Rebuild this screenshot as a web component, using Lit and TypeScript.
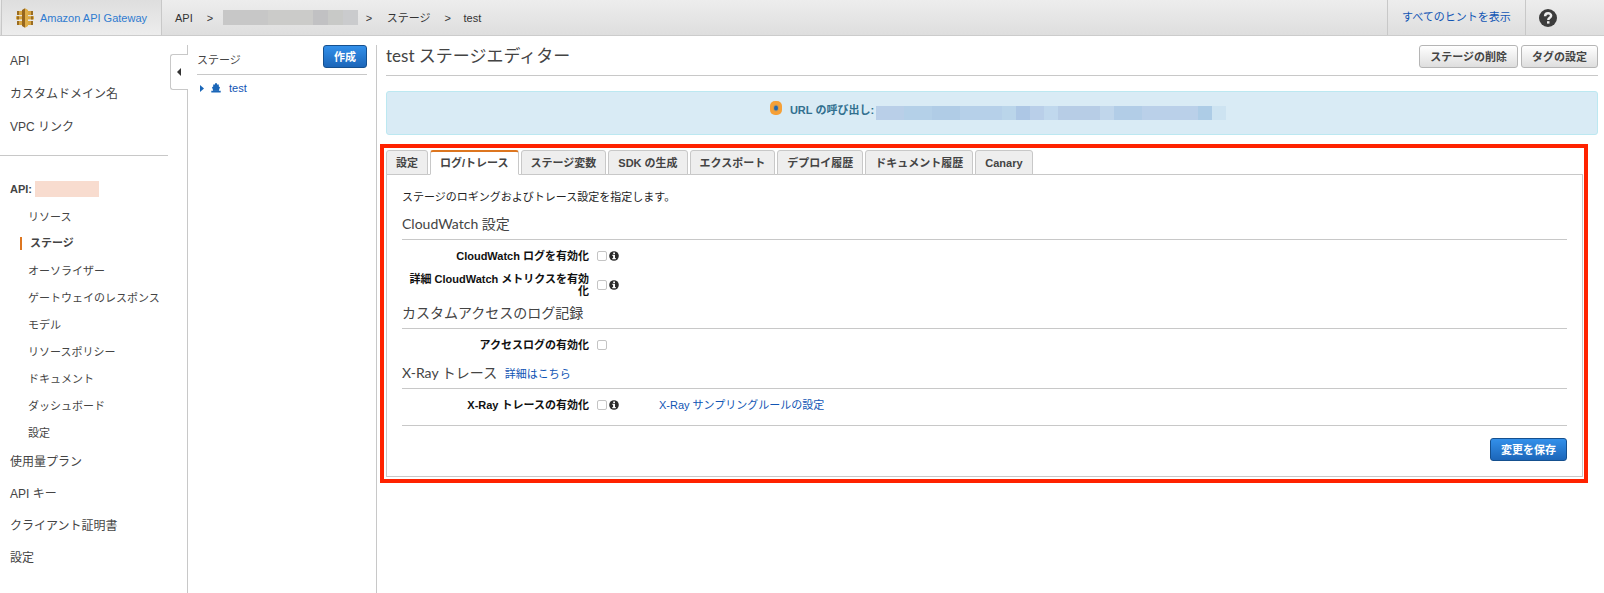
import { LitElement, html, css, svg } from "lit";
import { customElement, state } from "lit/decorators.js";
import { classMap } from "lit/directives/class-map.js";

const infoIcon = html`<svg class="info" viewBox="0 0 10 10" aria-hidden="true">
  <circle cx="5" cy="5" r="4.8" fill="#2b2b2b" />
  <path d="M4.2 1.4h1.8v1.5H4.2zM3.4 3.8h2.6v3.3h.8v1.2H3.3V7.1h.8V5h-.7z" fill="#fff" />
</svg>`;

const gatewayIcon = html`<svg class="logo" viewBox="0 0 18 20" aria-hidden="true">
  <path d="M0 8.2h18v3.2H0z" fill="#d9a741" />
  <path d="M1 3h6v4H1zM11 3h6v4h-6zM1 13h6v4H1zM11 13h6v4h-6z" fill="#d9a741" />
  <path d="M1 3h2v4H1zM15 3h2v4h-2zM1 13h2v4H1zM15 13h2v4h-2zM1 8.2h2v3.2H1zM15 8.2h2v3.2h-2z" fill="#9b6d22" />
  <path d="M6 2l3-1.8V19.8L6 18z" fill="#96661d" />
  <path d="M9 .2L12 2v16l-3 1.8z" fill="#dfae48" />
</svg>`;

const stageIcon = html`<svg class="ship" viewBox="0 0 10 10" aria-hidden="true">
  <path d="M4 .3h2v1.2h1.8v2L9 4.2 8 7H2L1 4.2l1.2-.7v-2H4zM.3 7.8h9.4v1.7H.3z" fill="#1a66b8" />
  <path d="M2 7.4h6" stroke="#1a66b8" stroke-width="1" />
</svg>`;

const helpMark = svg`<path d="M6.1 7.2c0-4 6-3.8 6-.4 0 2.1-2.8 2-2.8 4.2" fill="none" stroke="#ededed" stroke-width="2.5" />
  <path d="M8 12.2h2.5v2.4H8z" fill="#ededed" />`;

@customElement("app-root")
export class AppRoot extends LitElement {
  @state() private activeTab = "ログ/トレース";
  @state() private navOpen = true;

  private readonly topLinks = ["API", "カスタムドメイン名", "VPC リンク"];
  private readonly apiLinks = [
    "リソース",
    "ステージ",
    "オーソライザー",
    "ゲートウェイのレスポンス",
    "モデル",
    "リソースポリシー",
    "ドキュメント",
    "ダッシュボード",
    "設定",
  ];
  private readonly bottomLinks = ["使用量プラン", "API キー", "クライアント証明書", "設定"];
  private readonly tabs = [
    "設定",
    "ログ/トレース",
    "ステージ変数",
    "SDK の生成",
    "エクスポート",
    "デプロイ履歴",
    "ドキュメント履歴",
    "Canary",
  ];

  static styles = css`
    :host {
      display: flex;
      flex-direction: column;
      min-height: 100vh;
      background: #fff;
      color: #444;
      font: 11px/16px "Liberation Sans", "Noto Sans CJK JP", sans-serif;
    }
    * { box-sizing: border-box; }
    a { color: inherit; text-decoration: none; }
    a.link { color: #1155b4; }
    ul { list-style: none; margin: 0; padding: 0; }
    button {
      height: 23px;
      padding: 0 10px;
      border: 1px solid #b5b5b5;
      border-radius: 3px;
      background: linear-gradient(#fff, #dedede);
      color: #444;
      font: bold 11px/16px "Liberation Sans", "Noto Sans CJK JP", sans-serif;
      white-space: nowrap;
    }
    button.primary {
      border-color: #15508f;
      background: linear-gradient(#3390ea, #1c66b9);
      color: #fff;
    }

    .topbar {
      display: flex;
      height: 36px;
      padding-left: 1px;
      border-bottom: 1px solid #ccc;
      background: linear-gradient(#ededed, #dedede);
      line-height: 34px;
    }
    .brand {
      display: flex;
      align-items: center;
      gap: 6px;
      width: 161px;
      padding-left: 14px;
      border: solid #c8c8c8;
      border-width: 0 1px;
      background: linear-gradient(#dedede, #ededed);
      color: #2f7bd0;
    }
    .logo { width: 18px; height: 20px; }
    .crumbs { display: flex; flex: 1; padding-left: 13px; color: #333; }
    .crumbs li { display: flex; align-items: center; }
    .crumbs li + li::before { content: ">"; width: 7px; margin: 0 12px 0 14px; }
    .crumbs .masked-item::before { margin-right: 9px; }
    .crumbs .masked-item + li::before { margin-left: 8px; margin-right: 14px; }
    .masked { display: inline-block; flex: none; }
    .crumb-mask {
      width: 135px;
      height: 15px;
      background: linear-gradient(90deg, #c7c7c7 0 45px, #cbcbc9 45px 90px, #c1c1c3 90px 105px, #c8c9c7 105px 120px, #cacbcd 120px);
    }
    .hints { width: 139px; padding-left: 14px; border: solid #c8c8c8; border-width: 0 1px; }
    .help { display: flex; align-items: center; width: 78px; padding-left: 13px; }
    .help svg { width: 18px; height: 18px; }

    .body { display: grid; flex: 1; grid-template-columns: 188px 189px minmax(0, 1fr); }
    .nav { position: relative; padding-top: 9px; font-size: 12px; }
    .nav.closed ul, .nav.closed .api-name { visibility: hidden; }
    .nav::after {
      content: "";
      position: absolute;
      inset: 9px 0 0 auto;
      border-right: 1px solid #c8c8c8;
    }
    .nav a { display: block; }
    .top-links { padding: 0 0 11px 10px; margin-right: 20px; border-bottom: 1px solid #c8c8c8; line-height: 33px; }
    .api-name {
      display: flex;
      align-items: center;
      gap: 3px;
      margin: 22px 0 3px;
      padding-left: 10px;
      font-weight: bold;
      font-size: 11px;
      line-height: 22px;
    }
    .api-mask { width: 64px; height: 16px; background: #f8dccf; }
    .api-links { padding-left: 20px; font-size: 11px; }
    .api-links li { display: flex; align-items: center; height: 27px; padding-left: 8px; }
    .api-links .current a { margin-left: -8px; padding-left: 8px; border-left: 2px solid #dd7620; font-weight: bold; line-height: 13px; }
    .bottom-links { padding-left: 10px; line-height: 32px; }
    .toggle {
      position: absolute;
      z-index: 1;
      top: 18px;
      right: 0;
      display: flex;
      align-items: center;
      width: 18px;
      height: 36px;
      padding: 0 0 0 6px;
      border: 1px solid #c8c8c8;
      border-right: 0;
      border-radius: 3px 0 0 3px;
      background: #fff;
    }
    .toggle svg { width: 4px; height: 8px; }

    .stages { margin-top: 9px; padding: 0 9px; border-right: 1px solid #c8c8c8; }
    .stages-head {
      display: flex;
      justify-content: space-between;
      height: 30px;
      border-bottom: 1px solid #c8c8c8;
    }
    .stages-head h2 { margin: 0; font: inherit; line-height: 30px; }
    .stage { display: flex; align-items: center; height: 26px; padding-left: 3px; color: #1155b4; }
    .stage .caret { width: 4px; height: 7px; margin-right: 7px; }
    .ship { width: 10px; height: 10px; margin-right: 8px; }

    main { min-width: 0; padding: 9px 6px 0 9px; }
    .title { display: flex; gap: 3px; height: 31px; border-bottom: 1px solid #c8c8c8; }
    h1, h3 { margin: 0; font-family: Lato, "Noto Sans CJK JP", sans-serif; font-weight: normal; }
    h1 { flex: 1; font-size: 17px; line-height: 22px; }
    .alert {
      display: flex;
      justify-content: center;
      height: 44px;
      margin-top: 15px;
      padding: 9px 0 0 12px;
      border: 1px solid #bce8f1;
      border-radius: 3px;
      background: #d9ebf5;
      color: #31708f;
      font-weight: bold;
      line-height: 18px;
    }
    .alert svg { width: 12px; height: 14px; margin-right: 8px; }
    .url-mask {
      width: 350px;
      height: 14px;
      margin: 5px 0 0 2px;
      background: linear-gradient(90deg, #b9cfe8 0 28px, #b4d0e8 28px 56px, #b0cce6 56px 84px, #b6d0e9 84px 126px, #bad5ea 126px 140px, #adc7e5 140px 154px, #b9cfe9 154px 168px, #c0d8ed 168px 182px, #b7cde6 182px 224px, #c0d6eb 224px 238px, #b2cde7 238px 266px, #bad0e9 266px 322px, #adcce6 322px 336px, #cde3f1 336px);
    }

    .highlight { margin: 9px 10px 0 -6px; padding: 2px 1px 2px 2px; border: 4px solid #ff2200; }
    .tabs { display: flex; gap: 2px; }
    .tabs button {
      height: 25px;
      margin-bottom: -1px;
      padding: 0 9px;
      border: 1px solid #c8c8c8;
      border-radius: 3px 3px 0 0;
      background: #eee;
    }
    .tabs button.active { border-top: 2px solid #dd7620; border-bottom-color: #fff; background: #fff; }
    .panel { padding: 12px 15px 15px; border: 1px solid #c8c8c8; }
    .panel p { margin: 0 0 4px; color: #222; line-height: 20px; }
    h3 { padding-bottom: 2px; border-bottom: 1px solid #c8c8c8; font-size: 14px; line-height: 26px; }
    h3 a { margin-left: 4px; font: 11px/16px "Liberation Sans", "Noto Sans CJK JP", sans-serif; }
    .fields { display: flex; flex-direction: column; gap: 5px; padding: 4px 0 3px; }
    .fields.last { padding-bottom: 8px; border-bottom: 1px solid #c8c8c8; }
    .field { display: flex; align-items: center; min-height: 24px; line-height: 12px; }
    .field label { width: 187px; color: #111; font-weight: bold; text-align: right; }
    input {
      appearance: none;
      width: 10px;
      height: 10px;
      margin: 0 2px 0 8px;
      border: 1px solid #c4c4c4;
      border-radius: 2px;
      background: #fff;
    }
    input:checked { background: #2a7bd2; }
    .info { width: 10px; height: 10px; }
    .field a { margin-left: 40px; }
    .actions { display: flex; justify-content: flex-end; padding-top: 12px; }
  `;

  private links(items: string[]) {
    return items.map((t) => html`<li><a href="#">${t}</a></li>`);
  }

  private field(id: string, label: string, info: boolean, extra: unknown = null) {
    return html`<div class="field">
      <label for=${id}>${label}</label><input id=${id} type="checkbox" />${info ? infoIcon : null}${extra}
    </div>`;
  }

  render() {
    return html`
      <header class="topbar">
        <a class="brand" href="#">${gatewayIcon}<span>Amazon API Gateway</span></a>
        <ul class="crumbs">
          <li><a href="#">API</a></li>
          <li class="masked-item"><span class="masked crumb-mask"></span></li>
          <li><a href="#">ステージ</a></li>
          <li>test</li>
        </ul>
        <a class="hints link" href="#">すべてのヒントを表示</a>
        <a class="help" href="#" aria-label="ヘルプ">
          <svg viewBox="0 0 18 18"><circle cx="9" cy="9" r="9" fill="#3c3c3c" />${helpMark}</svg>
        </a>
      </header>
      <div class="body">
        <nav class=${classMap({ nav: true, closed: !this.navOpen })}>
          <ul class="top-links">${this.links(this.topLinks)}</ul>
          <div class="api-name">API:<span class="masked api-mask"></span></div>
          <ul class="api-links">
            ${this.apiLinks.map(
              (t) => html`<li class=${classMap({ current: t === "ステージ" })}><a href="#">${t}</a></li>`
            )}
          </ul>
          <ul class="bottom-links">${this.links(this.bottomLinks)}</ul>
          <button class="toggle" aria-label="メニュー" @click=${() => (this.navOpen = !this.navOpen)}>
            <svg viewBox="0 0 4 8"><path d="M4 0v8L0 4z" fill="#333" /></svg>
          </button>
        </nav>
        <aside class="stages">
          <div class="stages-head">
            <h2>ステージ</h2>
            <button class="primary">作成</button>
          </div>
          <a class="stage" href="#">
            <svg class="caret" viewBox="0 0 4 7"><path d="M0 0v7l4-3.5z" fill="#1a66b8" /></svg>
            ${stageIcon}<span>test</span>
          </a>
        </aside>
        <main>
          <div class="title">
            <h1>test ステージエディター</h1>
            <button>ステージの削除</button>
            <button>タグの設定</button>
          </div>
          <div class="alert">
            <svg viewBox="0 0 12 14" aria-hidden="true">
              <rect width="12" height="14" rx="5" fill="#f6a037" />
              <ellipse cx="6" cy="7" rx="2.8" ry="3.4" fill="#c59a5c" />
              <ellipse cx="6" cy="7" rx="2" ry="2.6" fill="#2467ae" />
            </svg>
            <span>URL の呼び出し:</span><span class="masked url-mask"></span>
          </div>
          <section class="highlight">
            <div class="tabs" role="tablist">
              ${this.tabs.map(
                (t) => html`<button
                  role="tab"
                  aria-selected=${t === this.activeTab}
                  class=${classMap({ active: t === this.activeTab })}
                  @click=${() => (this.activeTab = t)}
                >${t}</button>`
              )}
            </div>
            <div class="panel" role="tabpanel">
              <p>ステージのロギングおよびトレース設定を指定します。</p>
              <h3>CloudWatch 設定</h3>
              <div class="fields">
                ${this.field("cw-logs", "CloudWatch ログを有効化", true)}
                ${this.field("cw-metrics", "詳細 CloudWatch メトリクスを有効化", true)}
              </div>
              <h3>カスタムアクセスのログ記録</h3>
              <div class="fields">${this.field("access-logs", "アクセスログの有効化", false)}</div>
              <h3>X-Ray トレース <a class="link" href="#">詳細はこちら</a></h3>
              <div class="fields last">
                ${this.field(
                  "xray",
                  "X-Ray トレースの有効化",
                  true,
                  html`<a class="link" href="#">X-Ray サンプリングルールの設定</a>`
                )}
              </div>
              <div class="actions"><button class="primary">変更を保存</button></div>
            </div>
          </section>
        </main>
      </div>
    `;
  }
}
